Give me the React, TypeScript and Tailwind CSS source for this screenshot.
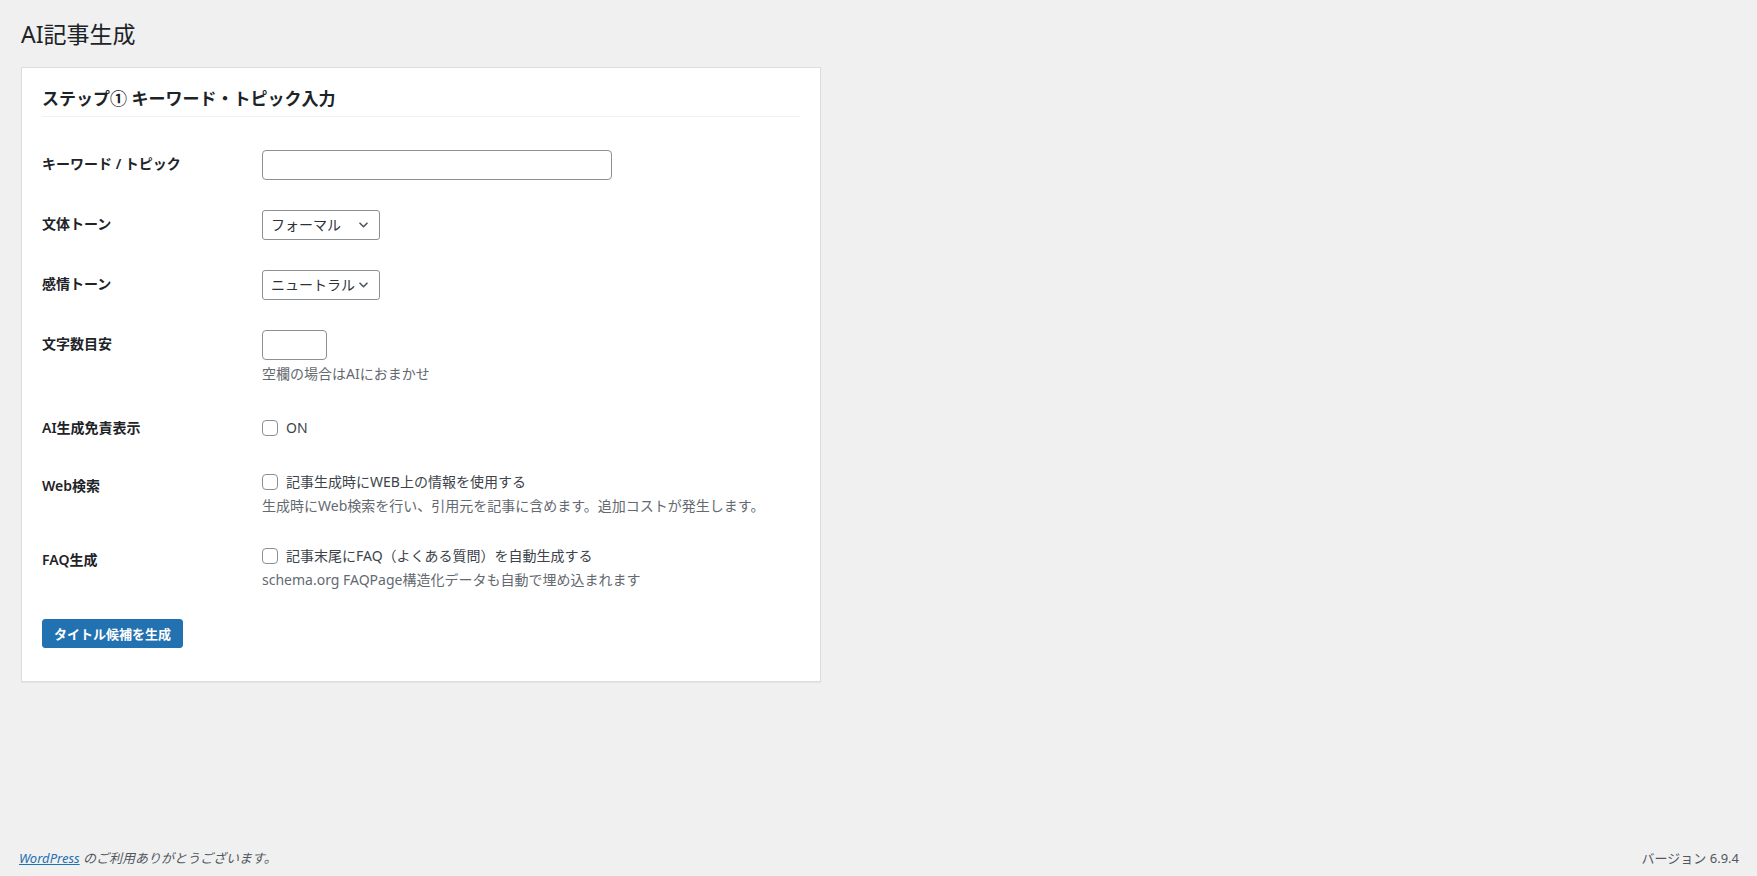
import React from "react";

function Chevron() {
  return (
    <svg width="9" height="6" viewBox="0 0 9 6" className="shrink-0">
      <path d="M1 1.2l3.5 3.5 3.5-3.5" stroke="#50575e" strokeWidth="1.6" fill="none" strokeLinecap="round" strokeLinejoin="round" />
    </svg>
  );
}

function Select({ value }: { value: string }) {
  return (
    <div className="inline-flex items-center justify-between w-[118px] h-[30px] border border-[#8c8f94] rounded-[3px] bg-white pl-[8px] pr-[11px] text-[14px] leading-[20px] text-[#2c3338]">
      <span className="whitespace-nowrap">{value}</span>
      <Chevron />
    </div>
  );
}

function Checkbox() {
  return (
    <input
      type="checkbox"
      className="appearance-none w-4 h-4 m-0 border border-[#8c8f94] rounded-[4px] bg-white shrink-0"
    />
  );
}

function Row({ label, children }: { label: string; children: React.ReactNode }) {
  return (
    <div className="flex">
      <div className="w-[220px] shrink-0 pt-5 text-[14px] leading-[18px] font-semibold text-[#1d2327]">
        {label}
      </div>
      <div className="pt-[15px] pb-[15px] text-[14px] text-[#3c434a]">{children}</div>
    </div>
  );
}

function Desc({ children }: { children: React.ReactNode }) {
  return <p className="mt-[4px] text-[14px] leading-[20px] text-[#646970] whitespace-nowrap">{children}</p>;
}

export default function App() {
  return (
    <div className="min-h-[876px] bg-[#f0f0f1] flex flex-col text-[#3c434a] font-['Noto_Sans','Noto_Sans_CJK_JP',sans-serif]">
      <div className="flex-1 pl-[21px] pt-[19px]">
        <h1 className="text-[23px] leading-[30px] font-normal text-[#1d2327]">AI記事生成</h1>
        <div className="mt-[18px] w-[800px] border border-[#dcdcde] bg-white shadow-[0_1px_1px_rgba(0,0,0,0.04)] px-5 pt-5 pb-[33px]">
          <h2 className="text-[17px] leading-[22px] font-semibold text-[#1d2327] pb-[6px] border-b border-[#f0f0f1]">
            ステップ① キーワード・トピック入力
          </h2>
          <div className="mt-[18px] flex flex-col">
            <Row label="キーワード / トピック">
              <input type="text" className="block w-[350px] h-[30px] border border-[#8c8f94] rounded-[4px] bg-white" />
            </Row>
            <Row label="文体トーン">
              <Select value="フォーマル" />
            </Row>
            <Row label="感情トーン">
              <Select value="ニュートラル" />
            </Row>
            <Row label="文字数目安">
              <input type="text" className="block w-[65px] h-[30px] border border-[#8c8f94] rounded-[4px] bg-white" />
              <Desc>空欄の場合はAIにおまかせ</Desc>
            </Row>
            <Row label="AI生成免責表示">
              <label className="flex items-center gap-2 h-[28px] leading-[20px]">
                <Checkbox />
                <span>ON</span>
              </label>
            </Row>
            <Row label="Web検索">
              <label className="flex items-center gap-2 h-[20px] leading-[20px]">
                <Checkbox />
                <span className="whitespace-nowrap">記事生成時にWEB上の情報を使用する</span>
              </label>
              <Desc>生成時にWeb検索を行い、引用元を記事に含めます。追加コストが発生します。</Desc>
            </Row>
            <Row label="FAQ生成">
              <label className="flex items-center gap-2 h-[20px] leading-[20px]">
                <Checkbox />
                <span className="whitespace-nowrap">記事末尾にFAQ（よくある質問）を自動生成する</span>
              </label>
              <Desc>schema.org FAQPage構造化データも自動で埋め込まれます</Desc>
            </Row>
          </div>
          <button
            type="button"
            className="mt-[14px] h-[29px] px-[11px] bg-[#2271b1] border border-[#2271b1] rounded-[3px] text-white text-[13px] leading-[20px] font-semibold"
          >
            タイトル候補を生成
          </button>
        </div>
      </div>
      <div className="flex justify-between items-center pl-[19px] pr-[18px] pb-[8px] text-[13px] leading-[20px] text-[#50575e]">
        <p className="italic">
          <a href="#" className="text-[#2271b1] underline">WordPress</a> のご利用ありがとうございます。
        </p>
        <p>バージョン 6.9.4</p>
      </div>
    </div>
  );
}
